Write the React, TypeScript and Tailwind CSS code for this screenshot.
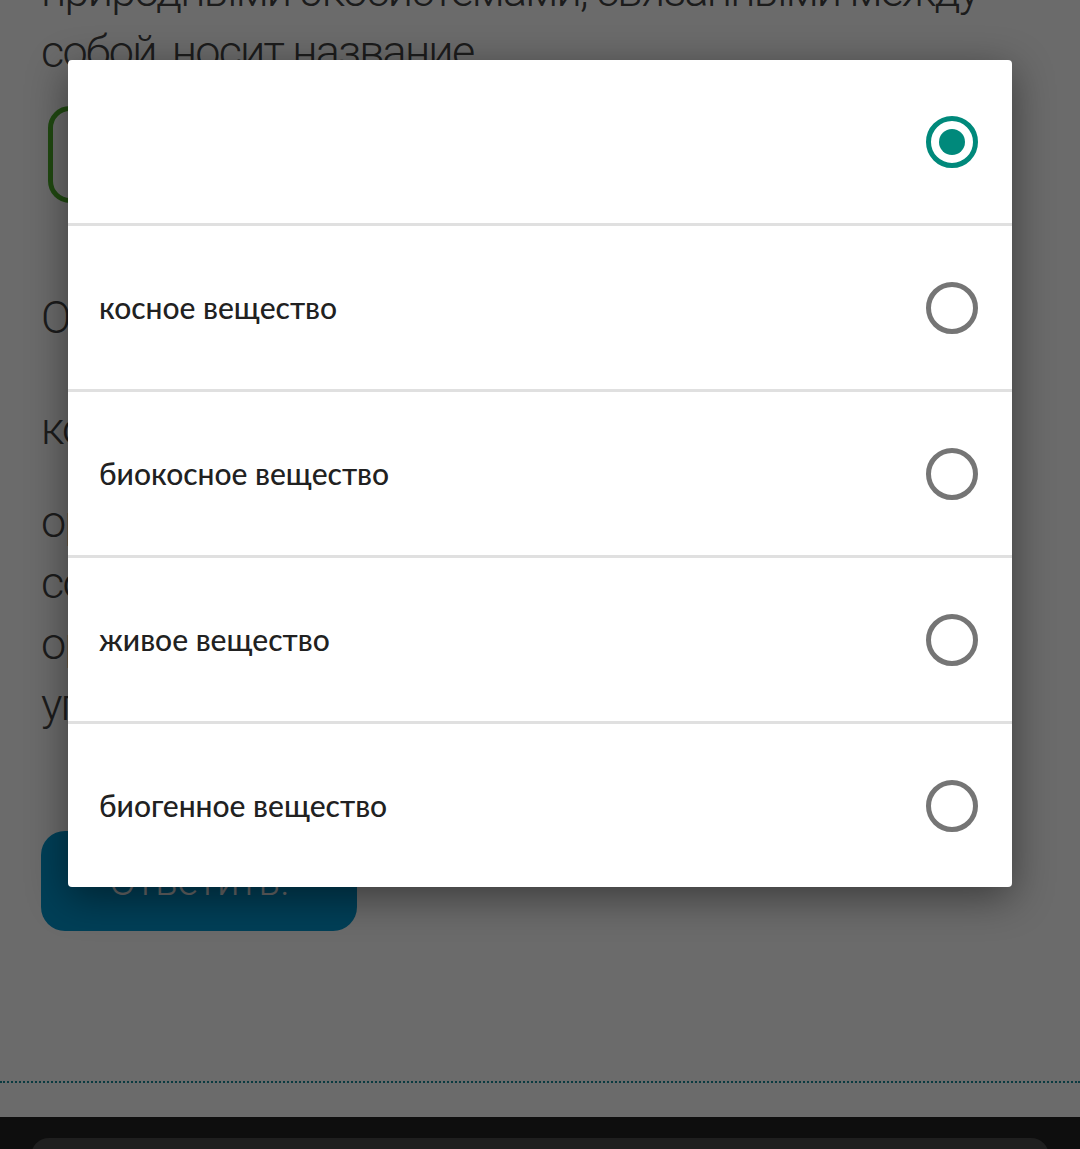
import React from "react";

const options = [
  { label: "", selected: true },
  { label: "косное вещество", selected: false },
  { label: "биокосное вещество", selected: false },
  { label: "живое вещество", selected: false },
  { label: "биогенное вещество", selected: false },
];

function Radio({ selected }: { selected: boolean }) {
  if (selected) {
    return (
      <div className="w-[52px] h-[52px] rounded-full border-[5px] border-[#00897b] flex items-center justify-center">
        <div className="w-[26px] h-[26px] rounded-full bg-[#00897b]" />
      </div>
    );
  }
  return <div className="w-[52px] h-[52px] rounded-full border-[5px] border-[#757575]" />;
}

export default function App() {
  return (
    <div className="relative w-[1080px] h-[1149px] overflow-hidden bg-white" style={{ fontFamily: "Roboto, sans-serif" }}>
      {/* underlying page */}
      <div className="flex flex-col h-full">
        <div className="flex-1 px-[41px] text-[#444] font-light text-[45px] leading-[61px] tracking-[-1.8px]">
          <div className="-mt-[40px] whitespace-nowrap">природными экосистемами, связанными между</div>
          <div>собой, носит название</div>
          <div className="mt-[24px] ml-[7px] w-[700px] h-[97px] rounded-[22px] border-[5px] border-[#4caf2a]" />
          <div className="mt-[84px]">Органическое вещество, …</div>
          <div className="mt-[50px]">которое …</div>
          <div className="mt-[32px]">органическое вещество</div>
          <div>созданное живыми</div>
          <div>организмами и</div>
          <div>углеводородами …</div>
          <div className="mt-[96px] w-[316px] h-[100px] rounded-[24px] bg-[#0097cf] flex items-center justify-center text-white text-[40px] tracking-normal">
            Ответить!
          </div>
          <div className="mt-[150px] -mx-[41px] border-t-2 border-dotted border-[#1a8a9a]" />
        </div>
        <div className="h-[31px] bg-[#0e0e0e] flex-none" />
      </div>

      {/* overlay */}
      <div className="absolute inset-x-0 top-0 h-[1117px] bg-black/[0.58]" />
      <div className="absolute inset-x-0 top-[1117px] bottom-0 bg-[#0e0e0e]">
        <div className="mx-[31px] mt-[21px] h-[40px] rounded-t-[18px] bg-[#1f1f1f]" />
      </div>

      {/* dialog */}
      <div className="absolute left-[68px] top-[60px] w-[944px] bg-white rounded-[4px] shadow-[0_10px_40px_rgba(0,0,0,0.45)] flex flex-col">
        {options.map((o, i) => (
          <React.Fragment key={i}>
            {i > 0 && <div className="h-[3px] bg-[#e0e0e0]" />}
            <div className="h-[163px] flex items-center justify-between pl-[31px] pr-[34px]">
              <span
                className="text-[30px] font-medium text-[#212121]"
                style={{ fontFamily: "Lato, 'Noto Sans', sans-serif" }}
              >
                {o.label}
              </span>
              <Radio selected={o.selected} />
            </div>
          </React.Fragment>
        ))}
      </div>
    </div>
  );
}
